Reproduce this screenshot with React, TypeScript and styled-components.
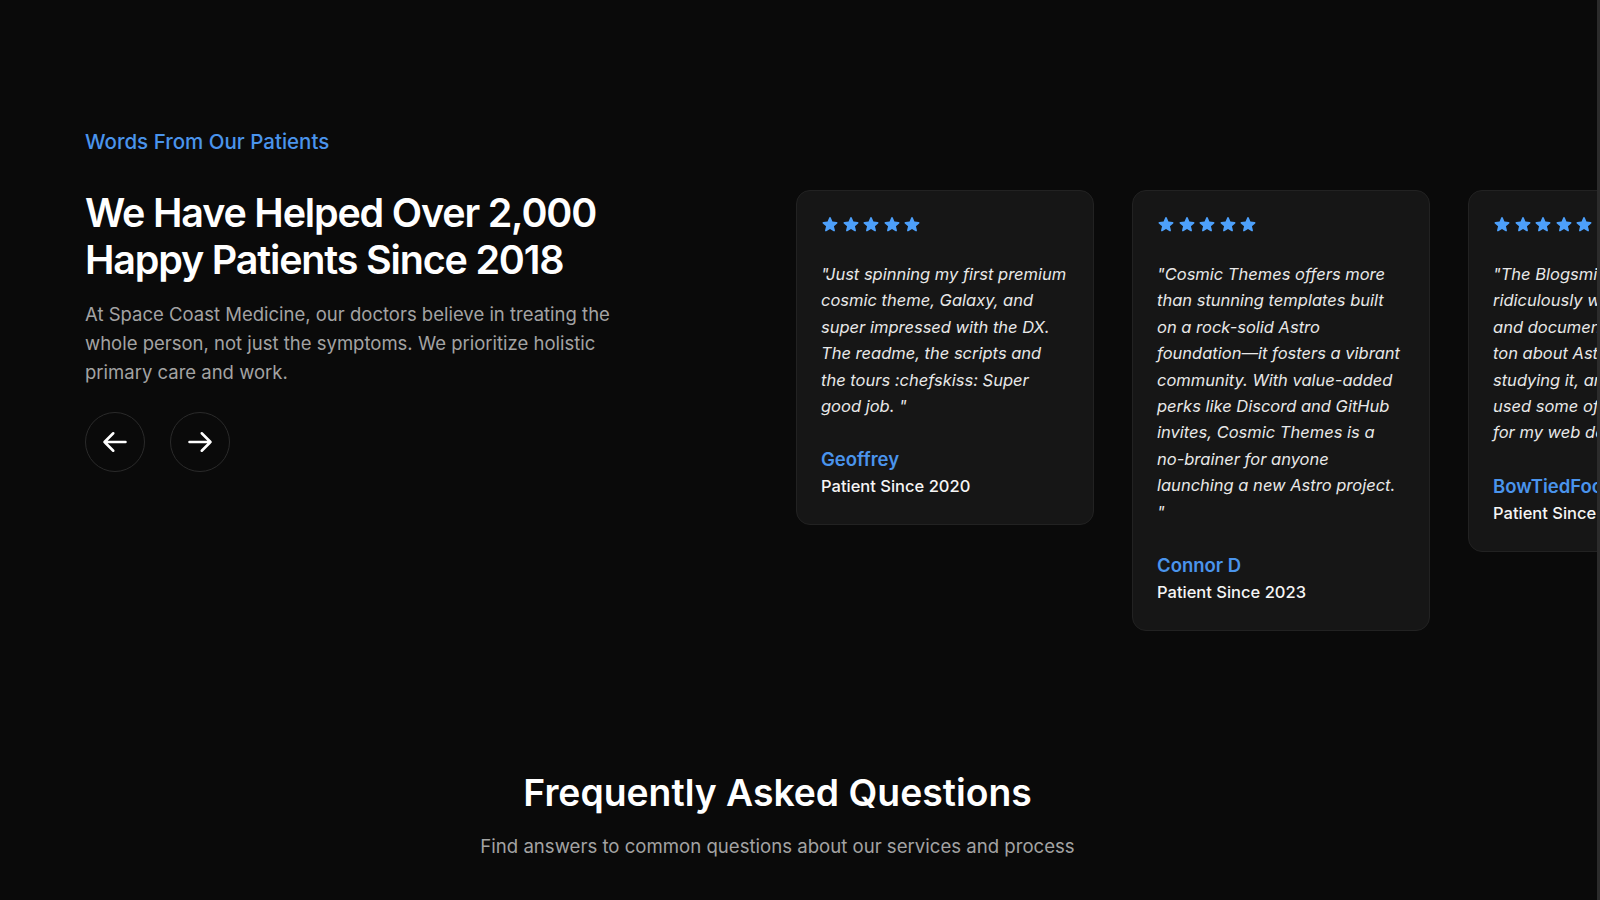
import React from "react";
import styled, { createGlobalStyle } from "styled-components";

const GlobalStyle = createGlobalStyle`
  html, body {
    margin: 0;
    padding: 0;
    background: #0a0a0a;
  }
  body {
    font-family: Inter, "Noto Sans", "Liberation Sans", sans-serif;
    color: #ffffff;
    overflow-x: hidden;
    border-right: 3px solid #2b2b2b;
    min-height: 100vh;
    box-sizing: border-box;
  }
  * { box-sizing: border-box; }
`;

const Page = styled.main`
  width: 100%;
  overflow: hidden;
`;

const TestimonialSection = styled.section`
  padding: 128px 0 75px 85px;
`;

const Eyebrow = styled.p`
  margin: 0;
  font-size: 20.5px;
  line-height: 28px;
  font-weight: 500;
  color: #4a94ec;
`;

const Row = styled.div`
  display: flex;
  align-items: flex-start;
  gap: 71px;
  margin-top: 32px;
`;

const Intro = styled.div`
  flex: 0 0 640px;
  display: flex;
  flex-direction: column;
`;

const Headline = styled.h2`
  margin: 2px 0 0;
  font-size: 39.5px;
  line-height: 47px;
  font-weight: 600;
  letter-spacing: -0.03em;
  color: #ffffff;
`;

const Lead = styled.p`
  margin: 16px 0 0;
  max-width: 560px;
  font-size: 18.5px;
  line-height: 28.8px;
  color: #a3a3a3;
`;

const Controls = styled.div`
  display: flex;
  gap: 25px;
  margin-top: 26px;
`;

const RoundButton = styled.button`
  width: 60px;
  height: 60px;
  border-radius: 50%;
  border: 1px solid #2a2a2a;
  background: transparent;
  color: #ffffff;
  display: flex;
  align-items: center;
  justify-content: center;
  padding: 0;
  cursor: pointer;
`;

const Track = styled.div`
  display: flex;
  align-items: flex-start;
  gap: 38px;
  margin-top: 2px;
  flex-shrink: 0;
`;

const Card = styled.article`
  flex: 0 0 298px;
  width: 298px;
  padding: 24px 24px 26px;
  border: 1px solid #222222;
  border-radius: 14px;
  background: #161616;
`;

const Stars = styled.div`
  display: flex;
  align-items: center;
  gap: 2.5px;
  height: 18px;
  margin-bottom: 28px;
  color: #4da0fb;
`;

const Quote = styled.blockquote`
  margin: 0;
  font-size: 16.5px;
  line-height: 26.4px;
  font-style: italic;
  color: #e8e8e8;
`;

const Name = styled.p`
  margin: 26px 0 0;
  font-size: 18.5px;
  line-height: 28px;
  font-weight: 600;
  color: #4a94ec;
  white-space: nowrap;
`;

const Role = styled.p`
  margin: 1px 0 0;
  font-size: 16.5px;
  line-height: 24px;
  font-weight: 500;
  color: #f5f5f5;
  white-space: nowrap;
`;

const FaqSection = styled.section`
  padding: 64px 127px 40px 85px;
  text-align: center;
`;

const FaqTitle = styled.h2`
  margin: 0;
  font-size: 37.3px;
  line-height: 45px;
  font-weight: 600;
  color: #ffffff;
`;

const FaqSubtitle = styled.p`
  margin: 17px 0 0;
  font-size: 18.6px;
  line-height: 28px;
  color: #a3a3a3;
`;

const Star = () => (
  <svg width="18" height="18" viewBox="0 0 20 20" fill="currentColor" aria-hidden="true">
    <path
      fillRule="evenodd"
      clipRule="evenodd"
      d="M10.868 2.884c-.321-.772-1.415-.772-1.736 0l-1.83 4.401-4.753.381c-.833.067-1.171 1.107-.536 1.651l3.62 3.102-1.106 4.637c-.194.813.691 1.456 1.405 1.02L10 15.591l4.069 2.485c.713.436 1.598-.207 1.404-1.02l-1.106-4.637 3.62-3.102c.635-.544.297-1.584-.536-1.65l-4.752-.382-1.831-4.401z"
    />
  </svg>
);

const Arrow = ({ dir }: { dir: "left" | "right" }) => (
  <svg width="28" height="28" viewBox="0 0 24 24" fill="none" stroke="currentColor" strokeWidth="2.2" strokeLinecap="round" strokeLinejoin="round" aria-hidden="true">
    {dir === "left" ? (
      <path d="M10.5 19.5 3 12m0 0 7.5-7.5M3 12h18" />
    ) : (
      <path d="M13.5 4.5 21 12m0 0-7.5 7.5M21 12H3" />
    )}
  </svg>
);

const testimonials = [
  {
    quote:
      "\"Just spinning my first premium cosmic theme, Galaxy, and super impressed with the DX. The readme, the scripts and the tours :chefskiss: Super good job. \"",
    name: "Geoffrey",
    since: "Patient Since 2020",
  },
  {
    quote:
      "\"Cosmic Themes offers more than stunning templates built on a rock-solid Astro foundation—it fosters a vibrant community. With value-added perks like Discord and GitHub invites, Cosmic Themes is a no-brainer for anyone launching a new Astro project. \"",
    name: "Connor D",
    since: "Patient Since 2023",
  },
  {
    quote:
      "\"The Blogsmith theme is ridiculously well made, clean, and documented. I learned a ton about Astro simply by studying it, and I have since used some of its best patterns for my web dev projects. \"",
    name: "BowTiedFocus",
    since: "Patient Since 2022",
  },
];

export default function App() {
  return (
    <Page>
      <GlobalStyle />
      <TestimonialSection>
        <Eyebrow>Words From Our Patients</Eyebrow>
        <Row>
          <Intro>
            <Headline>
              We Have Helped Over 2,000
              <br />
              Happy Patients Since 2018
            </Headline>
            <Lead>
              At Space Coast Medicine, our doctors believe in treating the whole person, not just the
              symptoms. We prioritize holistic primary care and work.
            </Lead>
            <Controls>
              <RoundButton aria-label="Previous testimonial">
                <Arrow dir="left" />
              </RoundButton>
              <RoundButton aria-label="Next testimonial">
                <Arrow dir="right" />
              </RoundButton>
            </Controls>
          </Intro>
          <Track>
            {testimonials.map((t) => (
              <Card key={t.name}>
                <Stars>
                  {[0, 1, 2, 3, 4].map((i) => (
                    <Star key={i} />
                  ))}
                </Stars>
                <Quote>{t.quote}</Quote>
                <Name>{t.name}</Name>
                <Role>{t.since}</Role>
              </Card>
            ))}
          </Track>
        </Row>
      </TestimonialSection>
      <FaqSection>
        <FaqTitle>Frequently Asked Questions</FaqTitle>
        <FaqSubtitle>Find answers to common questions about our services and process</FaqSubtitle>
      </FaqSection>
    </Page>
  );
}
